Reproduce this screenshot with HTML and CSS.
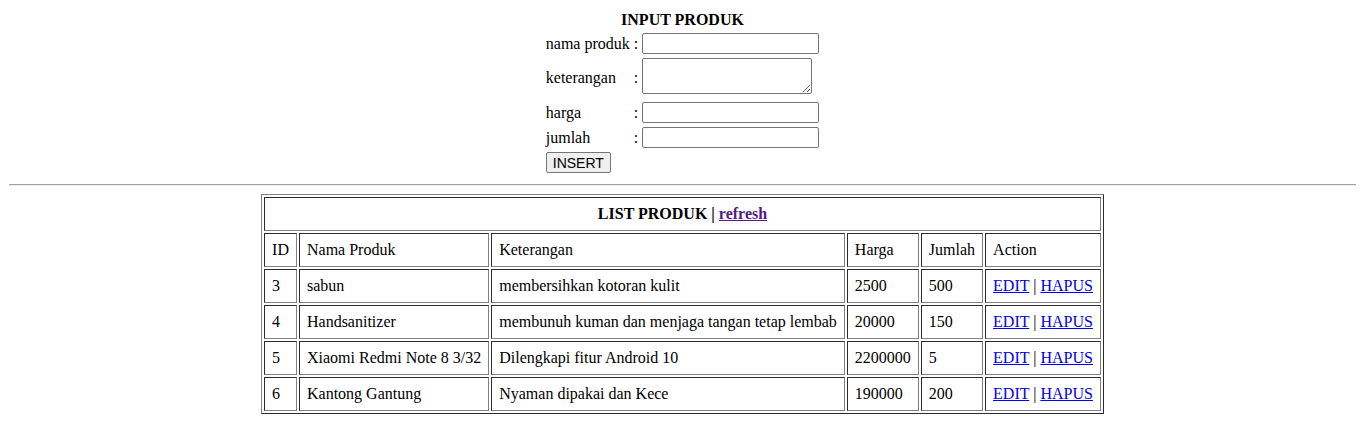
FILE: index.html
```html
<!DOCTYPE html>
<html lang="id">
<head>
    <meta charset="UTF-8">
    <title>Produk</title>
    <link rel="stylesheet" href="styles.css">
</head>
<body>

    <form class="form-produk">
        <table class="form-table">
            <tr>
                <th colspan="3">INPUT PRODUK</th>
            </tr>
            <tr>
                <td>nama produk</td>
                <td>:</td>
                <td><input type="text" name="nama"></td>
            </tr>
            <tr>
                <td>keterangan</td>
                <td>:</td>
                <td><textarea name="keterangan"></textarea></td>
            </tr>
            <tr>
                <td>harga</td>
                <td>:</td>
                <td><input type="text" name="harga"></td>
            </tr>
            <tr>
                <td>jumlah</td>
                <td>:</td>
                <td><input type="text" name="jumlah"></td>
            </tr>
            <tr>
                <td colspan="3"><button type="button">INSERT</button></td>
            </tr>
        </table>
    </form>

    <hr>

    <table class="list">
        <tr>
            <th colspan="6">LIST PRODUK | <a href="#" class="visited">refresh</a></th>
        </tr>
        <tr>
            <td>ID</td>
            <td>Nama Produk</td>
            <td>Keterangan</td>
            <td>Harga</td>
            <td>Jumlah</td>
            <td>Action</td>
        </tr>
        <tr>
            <td>3</td>
            <td>sabun</td>
            <td>membersihkan kotoran kulit</td>
            <td>2500</td>
            <td>500</td>
            <td><a href="#">EDIT</a> | <a href="#">HAPUS</a></td>
        </tr>
        <tr>
            <td>4</td>
            <td>Handsanitizer</td>
            <td>membunuh kuman dan menjaga tangan tetap lembab</td>
            <td>20000</td>
            <td>150</td>
            <td><a href="#">EDIT</a> | <a href="#">HAPUS</a></td>
        </tr>
        <tr>
            <td>5</td>
            <td>Xiaomi Redmi Note 8 3/32</td>
            <td>Dilengkapi fitur Android 10</td>
            <td>2200000</td>
            <td>5</td>
            <td><a href="#">EDIT</a> | <a href="#">HAPUS</a></td>
        </tr>
        <tr>
            <td>6</td>
            <td>Kantong Gantung</td>
            <td>Nyaman dipakai dan Kece</td>
            <td>190000</td>
            <td>200</td>
            <td><a href="#">EDIT</a> | <a href="#">HAPUS</a></td>
        </tr>
    </table>

</body>
</html>
```

FILE: styles.css
```css
body {
    margin: 8px 8px 8px 9px;
    font-family: "Liberation Serif", "Times New Roman", serif;
    font-size: 16px;
    color: black;
    background-color: white;
}
.form-produk {
    margin: 0;
}
.form-table {
    margin: 0 auto;
    border-spacing: 2px;
}
.form-table th, .form-table td {
    padding: 1px;
}
.form-table td {
    text-align: left;
}
input, textarea, button {
    font-family: "Liberation Sans", Arial, sans-serif;
    font-size: 13.333px;
    box-sizing: border-box;
    margin: 0;
}
input {
    width: 177px;
    height: 21px;
    padding: 1px 2px;
    border: 1px solid #767676;
    border-radius: 2px;
}
textarea {
    width: 170px;
    height: 36px;
    padding: 2px;
    border: 1px solid #767676;
    border-radius: 2px;
}
button {
    width: 65px;
    height: 21px;
    padding: 1px 6px;
    font-size: 14px;
    background-color: #efefef;
    border: 1px solid #767676;
    border-radius: 2px;
    color: black;
}
hr {
    margin: 8px 0 8px -1px;
    height: 0;
    border: none;
    border-top: 1px solid #a0a0a0;
    border-bottom: 1px solid #eeeeee;
}
.list {
    margin: 0 auto;
    border: 1px outset grey;
    border-spacing: 2px;
}
.list th, .list td {
    border: 1px inset grey;
    padding: 7px;
    text-align: left;
}
.list th {
    text-align: center;
}
a {
    color: #0000ee;
}
a.visited {
    color: #551a8b;
}
```
